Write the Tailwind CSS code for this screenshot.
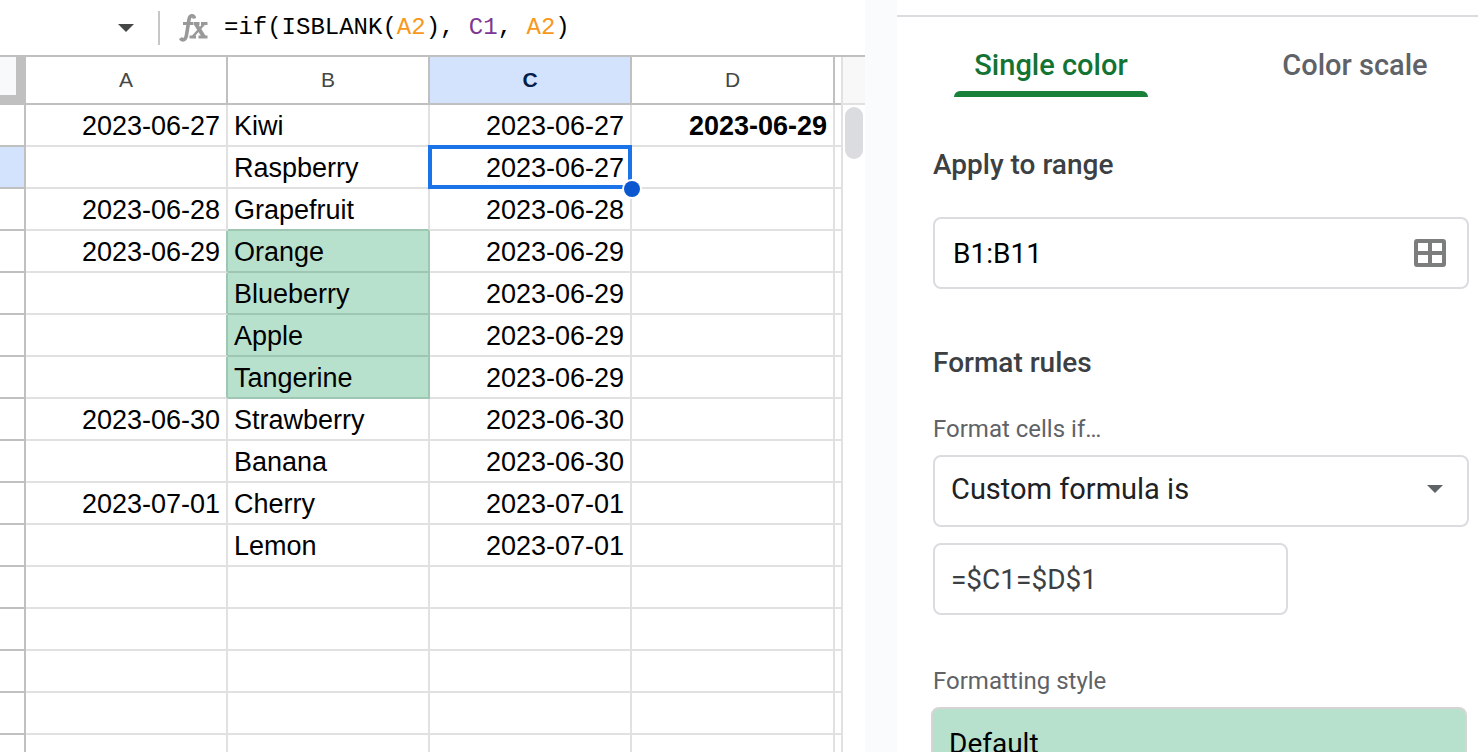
<!DOCTYPE html>
<html lang="en">
<head>
<meta charset="utf-8">
<title>Conditional format rules</title>
<script src="https://cdn.jsdelivr.net/npm/@tailwindcss/browser@4"></script>
</head>
<body class="flex h-screen overflow-hidden bg-white font-['Roboto',sans-serif]">
<main class="flex min-w-0 flex-1 flex-col overflow-hidden">
  <div class="flex h-[57px] shrink-0 items-center border-b-2 border-[#c0c0c0]">
    <button aria-label="Name box menu" class="ml-[118px] mr-6 h-8 w-4 shrink-0">
      <svg viewBox="0 0 16 8" class="h-2 w-4 fill-[#444746]"><path d="M0 0h16L8 8z"/></svg>
    </button>
    <span class="h-[34px] w-0.5 shrink-0 bg-[#c7c7c7]"></span>
    <svg viewBox="0 0 30 30" class="ml-[18px] h-[30px] w-[30px] shrink-0 fill-none stroke-[#999]">
      <path stroke-width="3.600" d="M16.500 5.500C15.500 1.500 11.800 2 11 6.500L8.500 22C7.800 27 4.500 28.500 2.500 25"/>
      <path stroke-width="3" d="M5 10.500h10.500M16 10.500h5.500M23 10.500h6.500M11.500 24h6.500M20.500 24H29.500"/>
      <path stroke-width="4" d="M17.500 10.500l8.500 13.500"/>
      <path stroke-width="2.600" d="M26.500 10.500l-12 13.500"/>
    </svg>
    <div contenteditable="true" aria-label="Formula bar" class="ml-4 whitespace-pre font-['Liberation_Mono',monospace] text-2xl text-black">=if(ISBLANK(<span class="text-[#f7981d]">A2</span>), <span class="text-[#7e3794]">C1</span>, <span class="text-[#f7981d]">A2</span>)</div>
  </div>
  <div class="flex min-h-0 flex-1">
    <div class="min-w-0 flex-1 overflow-hidden border-r-2 border-[#e1e1e1]">
      <table class="w-full table-fixed border-separate border-spacing-0 font-['Liberation_Sans',Arial,sans-serif] text-[27px] text-black">
        <colgroup><col class="w-[26px]"><col class="w-[202px]"><col class="w-[202px]"><col class="w-[202px]"><col><col class="w-[6px]"></colgroup>
        <thead>
          <tr class="h-12 text-[21px] text-[#444746] *:border-b-2 *:border-[#c0c0c0] *:p-0 *:font-normal">
            <td class="border-r-2 bg-[#c0c0c0] align-top"><div class="h-[38px] w-4 bg-[#f8f9fa]"></div></td>
            <th class="border-r-2">A</th><th class="border-r-2">B</th>
            <th class="border-r-2 bg-[#d3e3fd] text-[#041e49]"><b>C</b></th><th class="border-r-2">D</th><th></th>
          </tr>
        </thead>
        <tbody id="rows"></tbody>
      </table>
    </div>
    <div class="w-[22px] shrink-0">
      <div class="h-12 border-b-2 border-[#e1e1e1] bg-[#f8f8f8]"></div>
      <div class="mx-auto mt-0.5 h-[52px] w-[18px] rounded-full bg-[#dadce0]"></div>
    </div>
  </div>
</main>
<div class="w-8 shrink-0 bg-[#f9fbfd]"></div>
<aside class="w-[581px] shrink-0 overflow-hidden pt-[15px]">
  <div role="tablist" class="flex border-t-2 border-[#dadce0] pl-[57px] text-[29px] font-medium">
    <button role="tab" aria-selected="true" class="flex h-20 w-[194px] flex-col items-center justify-end whitespace-nowrap text-[#137333]">
      <span class="mb-2 leading-9">Single color</span>
      <span class="h-1.5 w-full rounded-t-md bg-[#188038]"></span>
    </button>
    <button role="tab" aria-selected="false" class="ml-[110px] flex h-20 w-[194px] flex-col items-center justify-end whitespace-nowrap text-[#5f6368]">
      <span class="mb-3.5 leading-9">Color scale</span>
    </button>
  </div>
  <form class="pl-9 pr-[9px]">
    <label for="range" class="mt-[50px] block text-[28px] font-medium leading-9 text-[#3c4043]">Apply to range</label>
    <div class="mt-[34px] flex h-[72px] items-center rounded-lg border-2 border-[#dadce0] pl-[18px] pr-[21px]">
      <input id="range" value="B1:B11" class="min-w-0 flex-1 pt-0.5 text-[28px] text-black outline-none">
      <button type="button" aria-label="Select data range">
        <svg viewBox="0 0 32 28" class="h-7 w-8 fill-none stroke-[#7c7e7d]" stroke-width="4"><rect x="2" y="2" width="28" height="24" rx="1"/><path d="M16 2v24M2 14h28"/></svg>
      </button>
    </div>
    <h2 class="mt-14 text-[28px] font-medium leading-9 text-[#3c4043]">Format rules</h2>
    <label for="cond" class="mt-8 block text-2xl leading-8 text-[#5f6368]">Format cells if…</label>
    <div class="relative mt-2.5">
      <select id="cond" class="h-[72px] w-full appearance-none rounded-lg border-2 border-[#dadce0] pb-0.5 pl-4 text-[29px] text-[#202124]"><option>Custom formula is</option></select>
      <svg viewBox="0 0 16 8" class="pointer-events-none absolute right-[26px] top-[30px] h-2 w-4 fill-[#5f6368]"><path d="M0 0h16L8 8z"/></svg>
    </div>
    <input aria-label="Custom formula" value="=$C1=$D$1" class="mt-4 block h-[72px] w-[355px] rounded-lg border-2 border-[#dadce0] px-4 text-[28px] text-[#3c4043]">
    <h3 class="mt-[50px] text-2xl leading-8 text-[#5f6368]">Formatting style</h3>
    <button type="button" class="-ml-0.5 mt-2.5 block h-[72px] w-[536px] rounded-lg border-2 border-[#d5d5d5] bg-[#b7e1cd] pl-4 pt-0.5 text-left text-[28px] text-black">Default</button>
  </form>
</aside>
<script>
const data = [
  ['2023-06-27','Kiwi','2023-06-27','2023-06-29'],
  ['','Raspberry','2023-06-27',''],
  ['2023-06-28','Grapefruit','2023-06-28',''],
  ['2023-06-29','Orange','2023-06-29',''],
  ['','Blueberry','2023-06-29',''],
  ['','Apple','2023-06-29',''],
  ['','Tangerine','2023-06-29',''],
  ['2023-06-30','Strawberry','2023-06-30',''],
  ['','Banana','2023-06-30',''],
  ['2023-07-01','Cherry','2023-07-01',''],
  ['','Lemon','2023-07-01',''],
  ['','','',''],['','','',''],['','','',''],['','','',''],['','','','']
];
const line = 'border-b-[#e1e1e1] border-r-[#e1e1e1]';
const greenLine = 'border-b-[#9fc5b3] border-r-[#9fc5b3]';
document.getElementById('rows').innerHTML = data.map((r, i) => {
  const green = r[2] && r[2] === data[0][3];
  const next = data[i + 1] && data[i + 1][2] === data[0][3];
  const a = green ? 'border-b-[#e1e1e1] border-r-[#9fc5b3]' : line;
  const b = green ? greenLine + ' bg-[#b7e1cd]' : next ? 'border-b-[#9fc5b3] border-r-[#e1e1e1]' : line;
  const sel = i === 1 ? '<span class="absolute -inset-0.5 border-4 border-[#1a73e8]"></span><span class="absolute -bottom-2.5 -right-2.5 z-10 size-4 rounded-full bg-[#0b57d0] ring-2 ring-white"></span>' : '';
  const cell = 'h-[42px] border-b-2 border-r-2 px-1.5 pb-0 pt-0.5 leading-[38px] ';
  return `<tr>
    <td class="h-[42px] border-b-2 border-r-2 border-[#c0c0c0] p-0 ${i === 1 ? 'bg-[#d3e3fd]' : ''}"></td>
    <td class="${cell}${a} text-right">${r[0]}</td>
    <td class="${cell}${b}">${r[1]}</td>
    <td class="${cell}${line} relative text-right">${r[2]}${sel}</td>
    <td class="${cell}${line} text-right font-bold">${r[3]}</td>
    <td class="h-[42px] border-b-2 border-[#e1e1e1] p-0"></td></tr>`;
}).join('');
</script>
</body>
</html>
